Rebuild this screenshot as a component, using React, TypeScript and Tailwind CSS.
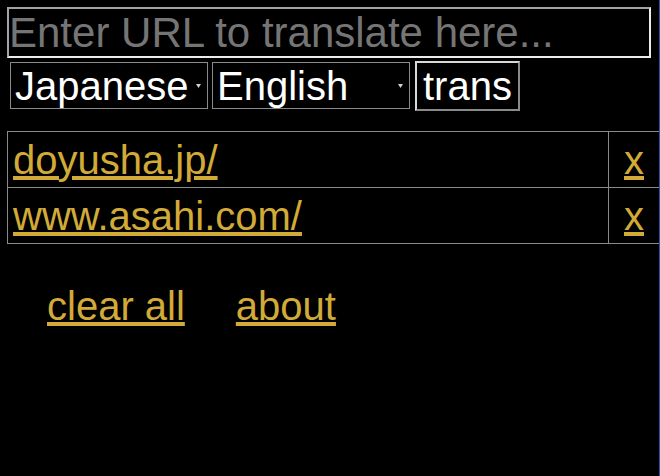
import React from "react";

const font = { fontFamily: '"Liberation Sans", Arial, sans-serif' };

function Arrow() {
  return (
    <svg width="5" height="4" viewBox="0 0 5 4" className="shrink-0">
      <path d="M0 0 L5 0 L2.5 4 Z" fill="#d0d0d0" />
    </svg>
  );
}

function Select({ label }: { label: string }) {
  return (
    <div className="mt-[1px] flex h-[47px] w-[198px] items-center justify-between border border-[#8a8a8a] pl-[4px] pr-[6px] text-[40px] leading-[46px] text-white">
      <span>{label}</span>
      <Arrow />
    </div>
  );
}

const rows = ["doyusha.jp/", "www.asahi.com/"];

export default function App() {
  return (
    <div className="flex h-[476px] w-[660px] overflow-hidden bg-black" style={font}>
      <div className="flex w-[659px] flex-col pl-[7px] pt-[7px]">
        <input
          type="text"
          placeholder="Enter URL to translate here..."
          className="h-[51px] w-[644px] border-2 border-b-[#ececec] border-l-[#a3a3a3] border-r-[#ececec] border-t-[#a3a3a3] bg-black px-0 text-[42px] text-white outline-none placeholder:text-[#757575]"
        />
        <div className="mt-[3px] flex items-start pl-[3px]">
          <Select label="Japanese" />
          <div className="ml-[4px]">
            <Select label="English" />
          </div>
          <button className="ml-[5px] h-[50px] border-2 border-b-[#8a8a8a] border-l-[#d8d8d8] border-r-[#8a8a8a] border-t-[#d8d8d8] bg-black px-[6px] text-[40px] leading-[46px] text-white">
            trans
          </button>
        </div>
        <div className="mt-[20px] flex flex-col border-b border-l border-t border-[#8a8a8a]">
          {rows.map((r, i) => (
            <div
              key={r}
              className={
                i > 0
                  ? "flex h-[56px] border-t border-[#8a8a8a]"
                  : "flex h-[55px]"
              }
            >
              <div className="flex w-[601px] items-center border-r border-[#8a8a8a] px-[5px] text-[40px] leading-[46px]">
                <a href="#" className="text-[#d2aa38] underline">
                  {r}
                </a>
              </div>
              <div className="flex flex-1 items-center justify-center text-[40px] leading-[46px]">
                <a href="#" className="text-[#d2aa38] underline">
                  x
                </a>
              </div>
            </div>
          ))}
        </div>
        <div className="mt-[39px] flex gap-[51px] pl-[40px] text-[40px] leading-[46px]">
          <a href="#" className="text-[#d2aa38] underline">
            clear all
          </a>
          <a href="#" className="text-[#d2aa38] underline">
            about
          </a>
        </div>
      </div>
      <div className="w-[1px] bg-[#1f5f9f]" />
    </div>
  );
}
